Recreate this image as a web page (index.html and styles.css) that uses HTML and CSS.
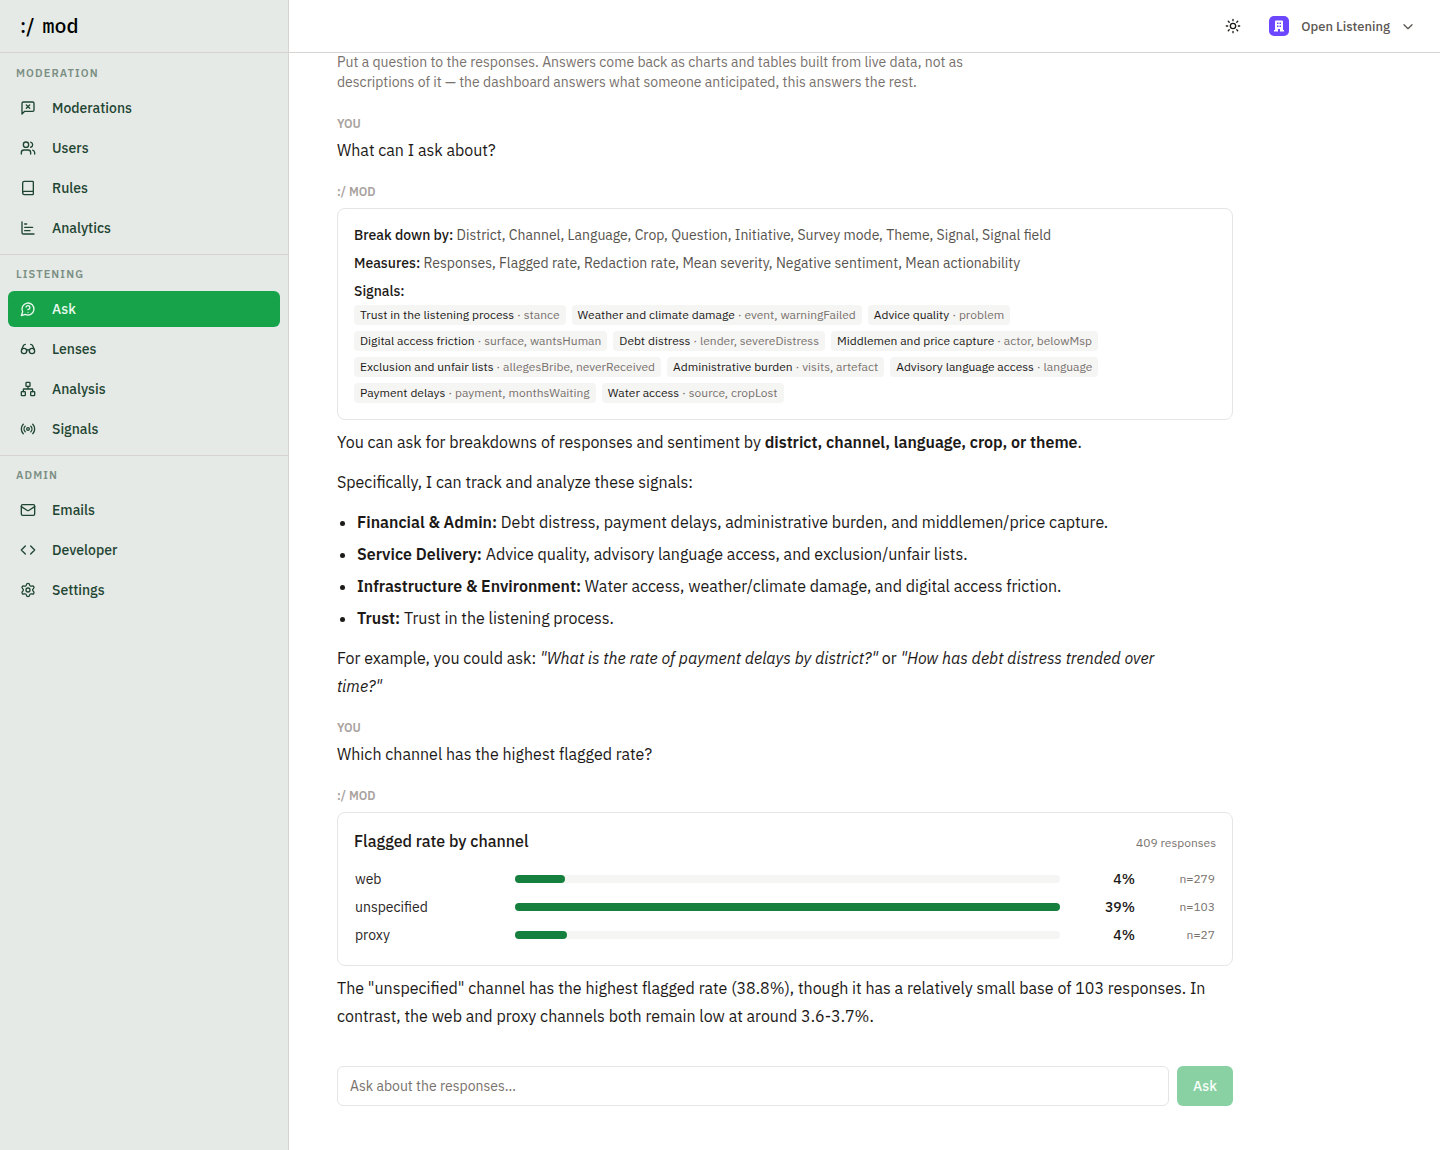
FILE: index.html
```
<!DOCTYPE html>
<html lang="en">
<head>
    <meta charset="UTF-8">
    <meta name="viewport" content="width=device-width, initial-scale=1.0">
    <title>Ask - :/ mod</title>
    <link rel="stylesheet" href="styles.css">
</head>
<body>

    <aside class="sidebar">
        <a class="brand" href="#"><span>:/</span> <span class="brand-name">mod</span></a>

        <nav class="nav">
            <section class="nav-group">
                <h2>Moderation</h2>
                <ul>
                    <li><a href="#"><svg class="icon" viewBox="0 0 24 24"><path d="M21 15a2 2 0 0 1-2 2H7l-4 4V5a2 2 0 0 1 2-2h14a2 2 0 0 1 2 2z"/><path d="m14.500 7.500-5 5M9.500 7.500l5 5"/></svg>Moderations</a></li>
                    <li><a href="#"><svg class="icon" viewBox="0 0 24 24"><path d="M16 21v-2a4 4 0 0 0-4-4H6a4 4 0 0 0-4 4v2"/><circle cx="9" cy="7" r="4"/><path d="M22 21v-2a4 4 0 0 0-3-3.870M16 3.130a4 4 0 0 1 0 7.750"/></svg>Users</a></li>
                    <li><a href="#"><svg class="icon" viewBox="0 0 24 24"><path d="M4 19.500v-15A2.500 2.500 0 0 1 6.500 2H19a1 1 0 0 1 1 1v18a1 1 0 0 1-1 1H6.500a1 1 0 0 1 0-5H20"/></svg>Rules</a></li>
                    <li><a href="#"><svg class="icon" viewBox="0 0 24 24"><path d="M3 3v16a2 2 0 0 0 2 2h16M7 16h8M7 11h12M7 6h3"/></svg>Analytics</a></li>
                </ul>
            </section>

            <section class="nav-group">
                <h2>Listening</h2>
                <ul>
                    <li><a class="active" href="#" aria-current="page"><svg class="icon" viewBox="0 0 24 24"><path d="M7.900 20A9 9 0 1 0 4 16.100L2 22Z"/><path d="M9.090 9a3 3 0 0 1 5.830 1c0 2-3 3-3 3M12 17h.01"/></svg>Ask</a></li>
                    <li><a href="#"><svg class="icon" viewBox="0 0 24 24"><circle cx="6" cy="15" r="4"/><circle cx="18" cy="15" r="4"/><path d="M14 15a2 2 0 0 0-4 0M2.500 13 5 7c.7-1.300 1.400-2 3-2M21.500 13 19 7c-.7-1.300-1.500-2-3-2"/></svg>Lenses</a></li>
                    <li><a href="#"><svg class="icon" viewBox="0 0 24 24"><rect x="16" y="16" width="6" height="6" rx="1"/><rect x="2" y="16" width="6" height="6" rx="1"/><rect x="9" y="2" width="6" height="6" rx="1"/><path d="M5 16v-3a1 1 0 0 1 1-1h12a1 1 0 0 1 1 1v3M12 12V8"/></svg>Analysis</a></li>
                    <li><a href="#"><svg class="icon" viewBox="0 0 24 24"><path d="M4.900 19.100C1 15.200 1 8.800 4.900 4.900M7.800 16.200c-2.300-2.300-2.300-6.100 0-8.500M16.200 7.800c2.300 2.300 2.300 6.100 0 8.500M19.100 4.900C23 8.800 23 15.100 19.100 19"/><circle cx="12" cy="12" r="2"/></svg>Signals</a></li>
                </ul>
            </section>

            <section class="nav-group">
                <h2>Admin</h2>
                <ul>
                    <li><a href="#"><svg class="icon" viewBox="0 0 24 24"><rect x="2" y="4" width="20" height="16" rx="2"/><path d="m22 7-8.970 5.700a1.940 1.940 0 0 1-2.060 0L2 7"/></svg>Emails</a></li>
                    <li><a href="#"><svg class="icon" viewBox="0 0 24 24"><path d="m16 18 6-6-6-6M8 6l-6 6 6 6"/></svg>Developer</a></li>
                    <li><a href="#"><svg class="icon" viewBox="0 0 24 24"><path d="M9.671 4.136a2.340 2.340 0 0 1 4.659 0 2.340 2.340 0 0 0 3.319 1.915 2.340 2.340 0 0 1 2.330 4.033 2.340 2.340 0 0 0 0 3.831 2.340 2.340 0 0 1-2.330 4.033 2.340 2.340 0 0 0-3.319 1.915 2.340 2.340 0 0 1-4.659 0 2.340 2.340 0 0 0-3.320-1.915 2.340 2.340 0 0 1-2.330-4.033 2.340 2.340 0 0 0 0-3.831A2.340 2.340 0 0 1 6.350 6.051a2.340 2.340 0 0 0 3.319-1.915"/><circle cx="12" cy="12" r="3"/></svg>Settings</a></li>
                </ul>
            </section>
        </nav>
    </aside>

    <div class="page">
        <header class="topbar">
            <button class="theme-toggle" type="button" aria-label="Toggle theme"><svg class="icon" viewBox="0 0 24 24"><circle cx="12" cy="12" r="4"/><path d="M12 2v2M12 20v2M4.930 4.930l1.410 1.410M17.660 17.660l1.410 1.410M2 12h2M20 12h2M6.340 17.660l-1.410 1.410M19.070 4.930l-1.410 1.410"/></svg></button>
            <button class="org" type="button">
                <svg class="org-logo" viewBox="0 0 20 20"><rect width="20" height="20" rx="5" fill="#6c47ff"/><path fill="#fff" fill-rule="evenodd" d="M7 4.500h6a1 1 0 0 1 1 1v8.500h1v1.500h-4v-2.500H9v2.500H5V14h1V5.500a1 1 0 0 1 1-1zM8 6.500V8h1.500V6.500zm2.500 0V8H12V6.500zM8 9.500V11h1.500V9.500zm2.500 0V11H12V9.500z"/></svg>
                <span>Open Listening</span>
                <svg class="icon" viewBox="0 0 24 24"><path d="m6 10 6 6 6-6"/></svg>
            </button>
        </header>

        <main class="content">
            <p class="intro">Put a question to the responses. Answers come back as charts and tables built from live data, not as descriptions of it — the dashboard answers what someone anticipated, this answers the rest.</p>

            <section class="turn">
                <h3>You</h3>
                <p>What can I ask about?</p>
            </section>

            <section class="turn answer">
                <h3>:/ mod</h3>
                <div class="card catalog">
                    <p><strong>Break down by:</strong> District, Channel, Language, Crop, Question, Initiative, Survey mode, Theme, Signal, Signal field</p>
                    <p><strong>Measures:</strong> Responses, Flagged rate, Redaction rate, Mean severity, Negative sentiment, Mean actionability</p>
                    <p><strong>Signals:</strong></p>
                    <ul class="chips">
                        <li>Trust in the listening process <span>· stance</span></li>
                        <li>Weather and climate damage <span>· event, warningFailed</span></li>
                        <li>Advice quality <span>· problem</span></li>
                        <li>Digital access friction <span>· surface, wantsHuman</span></li>
                        <li>Debt distress <span>· lender, severeDistress</span></li>
                        <li>Middlemen and price capture <span>· actor, belowMsp</span></li>
                        <li>Exclusion and unfair lists <span>· allegesBribe, neverReceived</span></li>
                        <li>Administrative burden <span>· visits, artefact</span></li>
                        <li>Advisory language access <span>· language</span></li>
                        <li>Payment delays <span>· payment, monthsWaiting</span></li>
                        <li>Water access <span>· source, cropLost</span></li>
                    </ul>
                </div>
                <div class="prose">
                    <p>You can ask for breakdowns of responses and sentiment by <strong>district, channel, language, crop, or theme</strong>.</p>
                    <p>Specifically, I can track and analyze these signals:</p>
                    <ul>
                        <li><strong>Financial &amp; Admin:</strong> Debt distress, payment delays, administrative burden, and middlemen/price capture.</li>
                        <li><strong>Service Delivery:</strong> Advice quality, advisory language access, and exclusion/unfair lists.</li>
                        <li><strong>Infrastructure &amp; Environment:</strong> Water access, weather/climate damage, and digital access friction.</li>
                        <li><strong>Trust:</strong> Trust in the listening process.</li>
                    </ul>
                    <p>For example, you could ask: <em>"What is the rate of payment delays by district?"</em> or <em>"How has debt distress trended over<br>time?"</em></p>
                </div>
            </section>

            <section class="turn">
                <h3>You</h3>
                <p>Which channel has the highest flagged rate?</p>
            </section>

            <section class="turn answer">
                <h3>:/ mod</h3>
                <div class="card">
                    <div class="card-head">
                        <h4>Flagged rate by channel</h4>
                        <span>409 responses</span>
                    </div>
                    <table class="chart">
                        <tbody>
                            <tr>
                                <th scope="row">web</th>
                                <td><div class="track"><div class="bar" style="width: 9.2%"></div></div></td>
                                <td class="value">4%</td>
                                <td class="count">n=279</td>
                            </tr>
                            <tr>
                                <th scope="row">unspecified</th>
                                <td><div class="track"><div class="bar" style="width: 100%"></div></div></td>
                                <td class="value">39%</td>
                                <td class="count">n=103</td>
                            </tr>
                            <tr>
                                <th scope="row">proxy</th>
                                <td><div class="track"><div class="bar" style="width: 9.5%"></div></div></td>
                                <td class="value">4%</td>
                                <td class="count">n=27</td>
                            </tr>
                        </tbody>
                    </table>
                </div>
                <div class="prose">
                    <p>The "unspecified" channel has the highest flagged rate (38.8%), though it has a relatively small base of 103 responses. In contrast, the web and proxy channels both remain low at around 3.6-3.7%.</p>
                </div>
            </section>

            <form class="ask-form">
                <input type="text" aria-label="Ask about the responses" placeholder="Ask about the responses…">
                <button type="submit" disabled>Ask</button>
            </form>
        </main>
    </div>

</body>
</html>
```
FILE: styles.css
```
* {
    box-sizing: border-box;
}
body {
    display: flex;
    min-height: 100vh;
    margin: 0;
    font-family: "IBM Plex Sans", Roboto, "Liberation Sans", sans-serif;
    font-size: 16px;
    line-height: 28px;
    color: #1c1917;
    background-color: #fff;
}
h2, h3, h4, p, ul {
    margin: 0;
    padding: 0;
}
button, input {
    font-family: inherit;
}
.icon {
    flex: none;
    width: 16px;
    height: 16px;
    fill: none;
    stroke: currentColor;
    stroke-width: 2;
    stroke-linecap: round;
    stroke-linejoin: round;
}

/* sidebar */
.sidebar {
    flex: none;
    width: 289px;
    background-color: #e5eae6;
    border-right: 1px solid #d6d3d1;
}
.brand {
    display: flex;
    align-items: center;
    gap: 8px;
    height: 53px;
    padding: 0 20px;
    border-bottom: 1px solid #d6d3d1;
    font-size: 20px;
    font-weight: 500;
    color: #000;
    text-decoration: none;
}
.brand-name {
    font-family: "IBM Plex Mono", "IBM Plex Sans", Roboto, sans-serif;
}
.nav {
    padding-top: 1px;
}
.nav-group {
    padding: 11px 8px 8px;
    border-bottom: 1px solid #d6d3d1;
}
.nav-group:last-child {
    border-bottom: 0;
}
.nav-group h2 {
    padding: 0 8px;
    margin-bottom: 9px;
    font-size: 11px;
    line-height: 16px;
    font-weight: 600;
    letter-spacing: 0.1em;
    text-transform: uppercase;
    color: #7b8f84;
}
.nav-group ul {
    display: grid;
    gap: 4px;
    list-style: none;
}
.nav-group a {
    display: flex;
    align-items: center;
    gap: 16px;
    height: 36px;
    padding: 0 12px;
    border-radius: 6px;
    font-size: 14px;
    font-weight: 500;
    color: #1f4533;
    text-decoration: none;
}
.nav-group a.active {
    background-color: #16a34a;
    color: #e9f9ee;
}

/* top bar */
.page {
    flex: 1;
    min-width: 0;
}
.topbar {
    position: sticky;
    top: 0;
    display: flex;
    align-items: center;
    justify-content: flex-end;
    gap: 28px;
    height: 53px;
    padding: 0 24px;
    background-color: #fff;
    border-bottom: 1px solid #d6d3d1;
}
.theme-toggle, .org {
    display: flex;
    align-items: center;
    padding: 0;
    border: 0;
    background: none;
    color: #1c1917;
}
.org {
    font-size: 13px;
    font-weight: 500;
    color: #5c5753;
}
.org span {
    margin: 0 10px 0 12px;
}
.org-logo {
    width: 20px;
    height: 20px;
}

/* conversation, tucked under the top bar border */
.content {
    max-width: 992px;
    margin-top: -1px;
    padding: 0 48px 44px;
}
.intro {
    max-width: 672px;
    margin-bottom: 24px;
    font-size: 14px;
    line-height: 20px;
    color: #78716c;
}
.turn {
    margin-bottom: 20px;
}
.turn h3 {
    margin-bottom: 4px;
    font-size: 12px;
    line-height: 16px;
    font-weight: 600;
    text-transform: uppercase;
    color: #a8a29e;
}
.answer h3 {
    margin-bottom: 8px;
}
.card {
    padding: 16px;
    margin-bottom: 8px;
    border: 1px solid #e5e5e5;
    border-radius: 8px;
}
.catalog p {
    margin-bottom: 8px;
    font-size: 14px;
    line-height: 20px;
    color: #57534e;
}
.catalog p:last-of-type {
    margin-bottom: 4px;
}
.catalog strong {
    font-weight: 500;
    color: #1c1917;
}
.chips {
    display: flex;
    flex-wrap: wrap;
    gap: 6px;
    list-style: none;
}
.chips li {
    padding: 2px 6px;
    border-radius: 4px;
    background-color: #f5f5f4;
    font-size: 12px;
    line-height: 16px;
}
.chips span {
    color: #78716c;
}
.prose {
    display: grid;
    gap: 12px;
}
.prose strong {
    font-weight: 600;
}
.prose ul {
    display: grid;
    gap: 4px;
    padding-left: 20px;
}

/* bar chart */
.card-head {
    display: flex;
    align-items: baseline;
    justify-content: space-between;
    margin-bottom: 12px;
    line-height: 24px;
}
.card-head h4 {
    font-size: 16px;
    font-weight: 500;
}
.card-head span {
    font-size: 12px;
    line-height: 16px;
    color: #78716c;
}
.chart {
    width: 100%;
    table-layout: fixed;
    border-collapse: collapse;
    font-size: 14px;
    line-height: 20px;
}
.chart th, .chart td {
    padding: 4px 1px;
}
.chart th {
    width: 160px;
    font-weight: 400;
    text-align: left;
    color: #292524;
}
.track {
    height: 8px;
    border-radius: 4px;
    background-color: #f5f5f4;
}
.bar {
    height: 8px;
    border-radius: 4px;
    background-color: #15803d;
}
.chart .value {
    width: 75px;
    font-weight: 500;
    text-align: right;
}
.chart .count {
    width: 80px;
    font-size: 12px;
    text-align: right;
    color: #78716c;
}

/* question box */
.ask-form {
    display: flex;
    gap: 8px;
    margin-top: 36px;
}
.ask-form input {
    flex: 1;
    min-width: 0;
    height: 40px;
    padding: 0 12px;
    border: 1px solid #e5e5e5;
    border-radius: 6px;
    font-size: 14px;
    background-color: #fff;
}
.ask-form input::placeholder {
    color: #78716c;
}
.ask-form button {
    width: 56px;
    height: 40px;
    padding: 0;
    border: 0;
    border-radius: 6px;
    background-color: #16a34a;
    font-size: 14px;
    font-weight: 500;
    color: #f0fdf4;
    opacity: 0.5;
}
```
